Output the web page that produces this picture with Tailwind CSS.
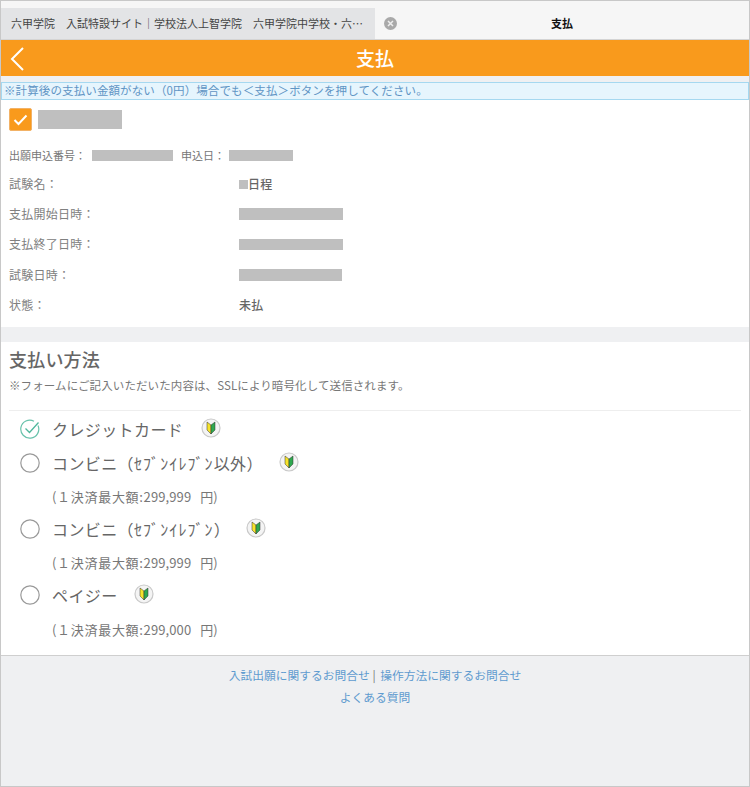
<!DOCTYPE html>
<html lang="ja">
<head>
<meta charset="utf-8">
<script src="https://cdn.jsdelivr.net/npm/@tailwindcss/browser@4"></script>
</head>
<body class="bg-white">
<div class="w-[750px] h-[787px] border border-[#c8c8c8] box-border flex flex-col overflow-hidden text-[#666] font-['Noto_Sans_CJK_JP','Liberation_Sans',sans-serif]">
  <!-- browser tabs -->
  <div class="h-[39px] shrink-0 bg-[#f6f6f6] flex items-end border-b border-[#d4d4d4]">
    <div class="w-[374px] h-[31px] bg-[#e3e4e6] flex items-center pl-[10px] text-[11px] text-[#444] whitespace-pre overflow-hidden">六甲学院　入試特設サイト｜学校法人上智学院　六甲学院中学校・六…</div>
    <div class="w-[30px] h-[31px] flex items-center justify-center pl-[1px]">
      <svg width="13" height="13" viewBox="0 0 13 13"><circle cx="6.5" cy="6.5" r="6.5" fill="#a9a9a9"/><path d="M4 4l5 5M9 4l-5 5" stroke="#eee" stroke-width="1.5"/></svg>
    </div>
    <div class="flex-1 h-[31px] flex items-center justify-center pr-[30px] text-[11px] font-bold text-[#111]">支払</div>
  </div>
  <!-- header -->
  <div class="relative h-[36px] shrink-0 bg-[#f99a1c] flex items-center justify-center text-white text-[19px] font-medium">
    <svg class="absolute left-[9px] top-[7px]" width="15" height="24" viewBox="0 0 15 24" fill="none"><path d="M13 1 2 12l11 11" stroke="#fff" stroke-width="2"/></svg>
    支払
  </div>
  <div class="h-[6px] shrink-0 bg-[#eff0f2]"></div>
  <!-- notice -->
  <div class="h-[18px] shrink-0 bg-[#e6f5fd] border border-[#a5d8f0] flex items-center pl-[2px] text-[11.5px] tracking-[0.11px] text-[#5f94c4] whitespace-nowrap">※計算後の支払い金額がない（0円）場合でも＜支払＞ボタンを押してください。</div>
  <!-- application -->
  <div class="shrink-0 bg-white px-[8px] pt-[8px] h-[227px]">
    <div class="flex items-center gap-[6px] h-[23px]">
      <div class="w-[23px] h-[23px] bg-[#f99a1c] border border-[#f2b266] rounded-[2px] flex items-center justify-center">
        <svg width="15" height="12" viewBox="0 0 15 12" fill="none"><path d="M1.5 6 5.5 10 13.5 1.5" stroke="#fff" stroke-width="2"/></svg>
      </div>
      <div class="w-[84px] h-[19px] bg-[#bfbfbf]"></div>
    </div>
    <div class="flex items-center h-[16px] mt-[16px] text-[11px] text-[#777] whitespace-nowrap">
      <span class="w-[83px]">出願申込番号：</span>
      <span class="w-[81px] h-[11px] bg-[#bfbfbf]"></span>
      <span class="ml-[8px] w-[48px]">申込日：</span>
      <span class="w-[64px] h-[11px] bg-[#bfbfbf]"></span>
    </div>
    <div class="mt-[6px] flex flex-col text-[12px] tracking-[0.25px] text-[#808080]">
      <div class="flex items-center h-[30px]"><span class="w-[230px]">試験名：</span><span class="flex items-center text-[#666] font-medium"><span class="w-[9px] h-[9px] bg-[#bfbfbf]"></span>日程</span></div>
      <div class="flex items-center h-[30px]"><span class="w-[230px]">支払開始日時：</span><span class="w-[104px] h-[12px] bg-[#bfbfbf]"></span></div>
      <div class="flex items-center h-[30px]"><span class="w-[230px]">支払終了日時：</span><span class="w-[104px] h-[11px] bg-[#bfbfbf]"></span></div>
      <div class="flex items-center h-[30px] pt-[1px]"><span class="w-[230px]">試験日時：</span><span class="w-[103px] h-[12px] bg-[#bfbfbf]"></span></div>
      <div class="flex items-center h-[30px] pt-[2px]"><span class="w-[230px]">状態：</span><span class="text-[#666] font-medium">未払</span></div>
    </div>
  </div>
  <div class="h-[15px] shrink-0 bg-[#eff0f2]"></div>
  <!-- payment -->
  <div class="shrink-0 bg-white h-[314px] px-[8px] border-b border-[#cfcfcf]">
    <h2 class="h-[27px] mt-[4px] flex items-center text-[18px] tracking-[0.2px] font-medium text-[#666]">支払い方法</h2>
    <p class="h-[16px] mt-[5px] flex items-center text-[11.5px] tracking-[0.1px] text-[#777] whitespace-nowrap">※フォームにご記入いただいた内容は、SSLにより暗号化して送信されます。</p>
    <div class="mt-[16px] border-t border-[#eeeeee]"></div>
    <div class="pl-[11px] flex flex-col text-[16px] tracking-[0.4px] text-[#666]">
      <div class="flex items-center h-[34px] mt-[1px]">
        <svg width="20" height="20" viewBox="0 0 20 20" fill="none"><path d="M18 6.5A9 9 0 1 1 14 2.2" stroke="#68c2ab" stroke-width="1.2"/><path d="M5.5 9.5 9.5 13.5 18.5 3.5" stroke="#4fb79c" stroke-width="1.3"/></svg>
        <span class="ml-[12px]">クレジットカード</span>
        <svg class="ml-[18px] -mt-[3px]" width="20" height="20" viewBox="0 0 20 20"><circle cx="10" cy="10" r="9" fill="#f4f4f4" stroke="#c9c9c9" stroke-width="1.2"/><path d="M10 7 6 4v8l4 4z" fill="#f6e32b" stroke="#333" stroke-width=".5"/><path d="M10 7l4-3v8l-4 4z" fill="#2fa84f" stroke="#333" stroke-width=".5"/></svg>
      </div>
      <div class="flex items-center h-[32px] mt-[1px]">
        <svg width="20" height="20" viewBox="0 0 20 20" fill="none"><circle cx="10" cy="10" r="9.2" stroke="#999" stroke-width="1.2"/></svg>
        <span class="ml-[12px] whitespace-nowrap">コンビニ（<span class="tracking-[1.1px]">ｾﾌﾞﾝｲﾚﾌﾞﾝ</span>以外）</span>
        <svg class="ml-[16px] -mt-[2px]" width="20" height="20" viewBox="0 0 20 20"><circle cx="10" cy="10" r="9" fill="#f4f4f4" stroke="#c9c9c9" stroke-width="1.2"/><path d="M10 7 6 4v8l4 4z" fill="#f6e32b" stroke="#333" stroke-width=".5"/><path d="M10 7l4-3v8l-4 4z" fill="#2fa84f" stroke="#333" stroke-width=".5"/></svg>
      </div>
      <div class="h-[32px] mt-[2px] flex items-center pl-[32px] text-[13px] tracking-[0.1px] text-[#777] whitespace-pre"><span class="tracking-[0.7px]">(１決済最大額:</span>299,999   円)</div>
      <div class="flex items-center h-[32px]">
        <svg width="20" height="20" viewBox="0 0 20 20" fill="none"><circle cx="10" cy="10" r="9.2" stroke="#999" stroke-width="1.2"/></svg>
        <span class="ml-[12px] whitespace-nowrap">コンビニ（<span class="tracking-[1.1px]">ｾﾌﾞﾝｲﾚﾌﾞﾝ</span>）</span>
        <svg class="ml-[16px] -mt-[2px]" width="20" height="20" viewBox="0 0 20 20"><circle cx="10" cy="10" r="9" fill="#f4f4f4" stroke="#c9c9c9" stroke-width="1.2"/><path d="M10 7 6 4v8l4 4z" fill="#f6e32b" stroke="#333" stroke-width=".5"/><path d="M10 7l4-3v8l-4 4z" fill="#2fa84f" stroke="#333" stroke-width=".5"/></svg>
      </div>
      <div class="h-[32px] mt-[2px] flex items-center pl-[32px] text-[13px] tracking-[0.1px] text-[#777] whitespace-pre"><span class="tracking-[0.7px]">(１決済最大額:</span>299,999   円)</div>
      <div class="flex items-center h-[32px]">
        <svg width="20" height="20" viewBox="0 0 20 20" fill="none"><circle cx="10" cy="10" r="9.2" stroke="#999" stroke-width="1.2"/></svg>
        <span class="ml-[12px] whitespace-nowrap">ペイジー</span>
        <svg class="ml-[16px] -mt-[2px]" width="20" height="20" viewBox="0 0 20 20"><circle cx="10" cy="10" r="9" fill="#f4f4f4" stroke="#c9c9c9" stroke-width="1.2"/><path d="M10 7 6 4v8l4 4z" fill="#f6e32b" stroke="#333" stroke-width=".5"/><path d="M10 7l4-3v8l-4 4z" fill="#2fa84f" stroke="#333" stroke-width=".5"/></svg>
      </div>
      <div class="h-[32px] mt-[3px] flex items-center pl-[32px] text-[13px] tracking-[0.1px] text-[#777] whitespace-pre"><span class="tracking-[0.7px]">(１決済最大額:</span>299,000   円)</div>
    </div>
  </div>
  <!-- footer -->
  <div class="flex-1 bg-[#eff0f2] flex flex-col items-center pt-[9px] text-[11.75px] text-[#5f9bcf]">
    <div class="h-[20px] flex items-center whitespace-pre"><a>入試出願に関するお問合せ</a><span class="text-[#777]"> | </span><a class="ml-[2px]">操作方法に関するお問合せ</a></div>
    <div class="h-[22px] mt-[1px] flex items-center"><a>よくある質問</a></div>
  </div>
</div>
</body>
</html>
